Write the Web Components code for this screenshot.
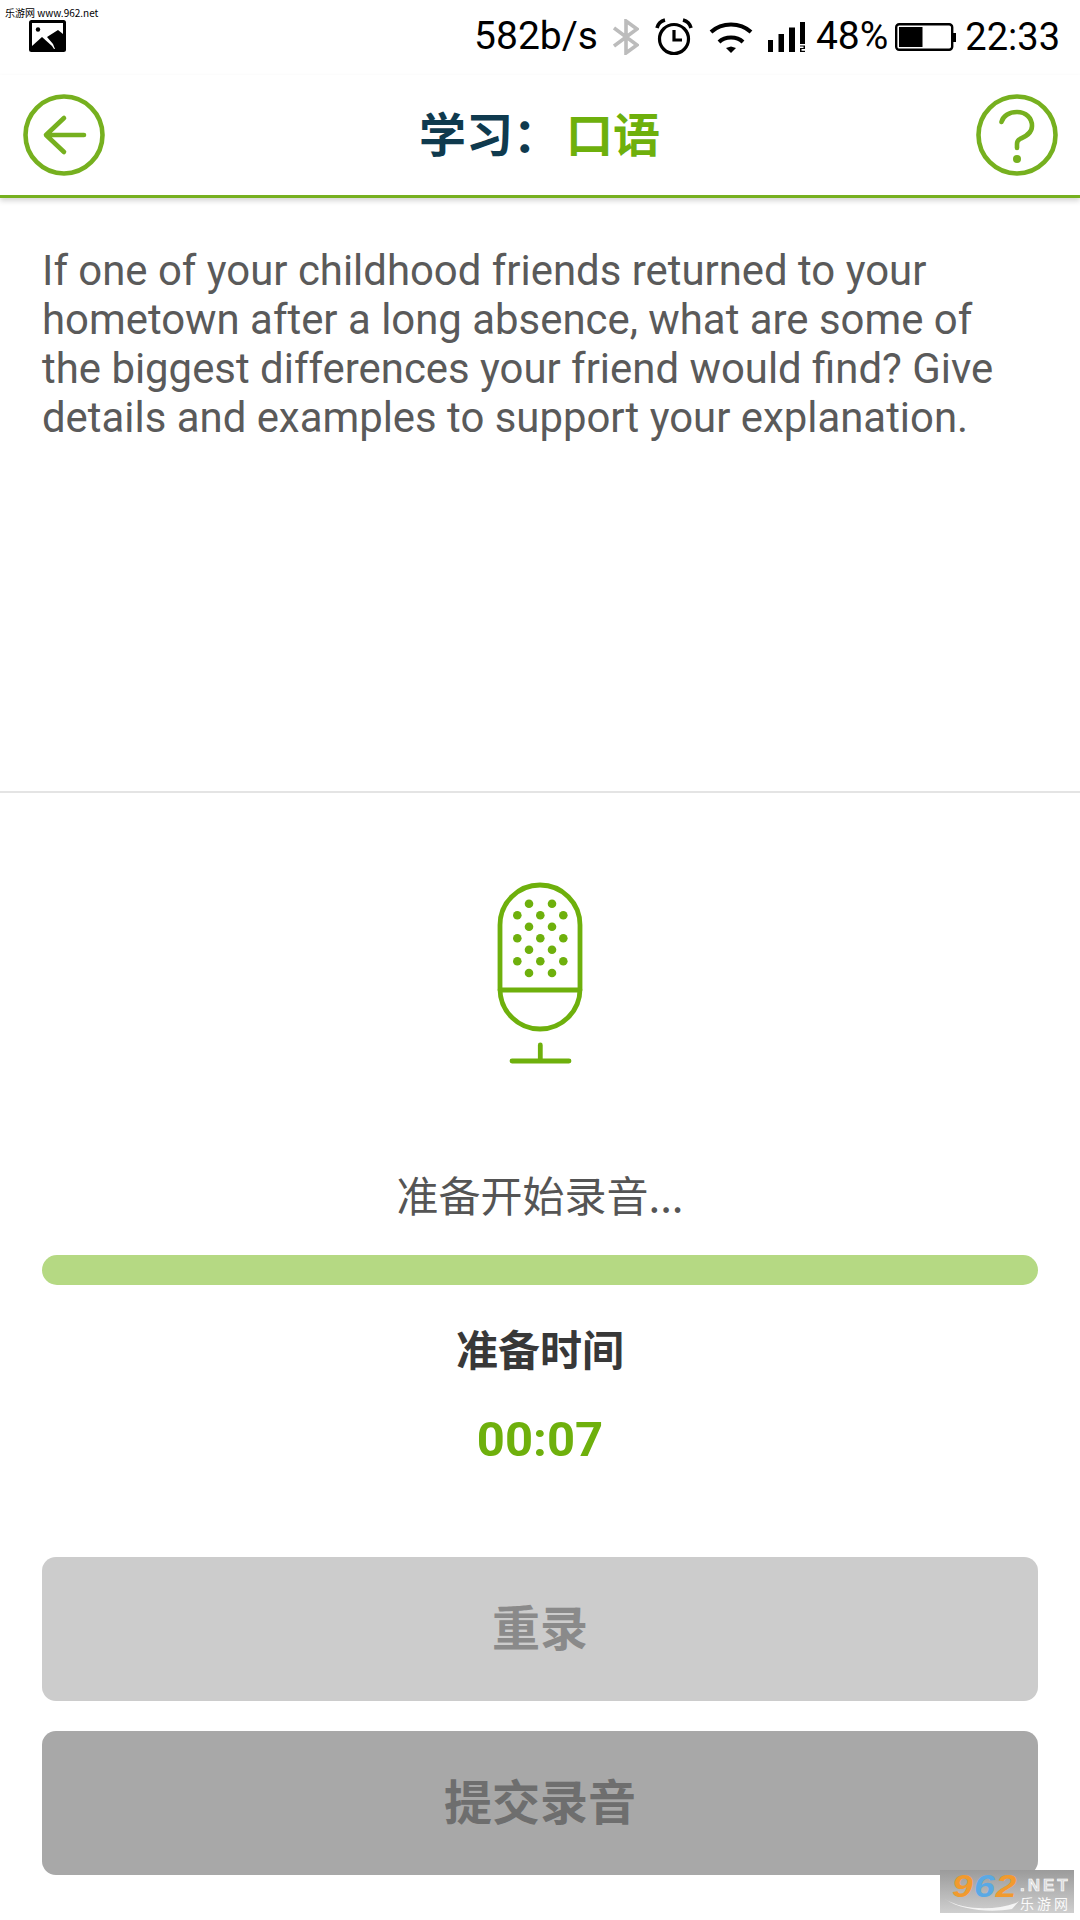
<!DOCTYPE html>
<html lang="zh">
<head>
<meta charset="utf-8">
<title>学习：口语</title>
<style>
  html, body {
    margin: 0;
    background: #fff;
  }

  body {
    width: 1080px;
    height: 1920px;
    overflow: hidden;
    font-family: Roboto, "Noto Sans CJK SC", sans-serif;
  }
</style>
</head>
<body>
<speaking-screen>
  <status-bar></status-bar>
  <title-bar>
    <span slot="label">学习：</span>
    <span slot="topic">口语</span>
  </title-bar>
  <question-panel>If one of your childhood friends returned to your hometown after a long absence, what are some of the biggest differences your friend would find? Give details and examples to support your explanation.</question-panel>
  <record-panel status="准备开始录音..." label="准备时间" time="00:07"></record-panel>
  <action-button tone="light">重录</action-button>
  <action-button tone="dark">提交录音</action-button>
</speaking-screen>
<site-badge></site-badge>

<script>
window.customElements.define('speaking-screen', class extends HTMLElement {
  constructor() {
    super();

    this.attachShadow({ mode: 'open' }).innerHTML = `<style>
  :host {
    display: flex;
    flex-direction: column;
    width: 1080px;
    height: 1920px;
    background: #fff;
  }
</style>
<slot></slot>`;
  }
});

window.customElements.define('status-bar', class extends HTMLElement {
  constructor() {
    super();

    this.attachShadow({ mode: 'open' }).innerHTML = `<style>
  :host {
    display: block;
    height: 75px;
    position: relative;
    color: #000;
    font: 39px/1 Roboto, sans-serif;
  }

  .source {
    position: absolute;
    left: 5px;
    top: 7px;
    font: 10px/12px "Noto Sans CJK SC", "Liberation Sans", sans-serif;
    white-space: nowrap;
  }

  .picture {
    position: absolute;
    left: 29px;
    top: 20px;
  }

  .right {
    display: flex;
    align-items: center;
    justify-content: flex-end;
    height: 73px;
    padding-right: 20px;
  }

  .clock {
    margin-left: 8px;
    font-size: 38px;
  }

  svg {
    display: block;
    flex: none;
  }
</style>
<div class="source">乐游网 www.962.net</div>
<svg class="picture" width="38" height="32" viewBox="0 0 38 32">
  <rect width="37" height="32" rx="2.5" fill="#000" />
  <rect x="3" y="3" width="31" height="26" fill="#fff" />
  <circle cx="9" cy="9.5" r="2.2" fill="#000" />
  <path d="M3 26 L13 17 L23 26 L25 29 H3 Z" fill="#000" />
  <path d="M18 17 L29 10 L34 14 V29 H26 L24 24 Z" fill="#000" />
</svg>
<div class="right">
  <span>582b/s</span>
  <svg style="margin-left:15px" width="26" height="36" viewBox="0 0 26 36" fill="none" stroke="#bcbcbc" stroke-width="3.6">
    <path d="M1 9 L24 26 L13 34 V2 L24 10 L1 27" />
  </svg>
  <svg style="margin-left:16px" width="38" height="38" viewBox="0 0 38 38" fill="none" stroke="#000">
    <circle cx="19" cy="21" r="14.5" stroke-width="3.2" />
    <path d="M19 12 V22 H27" stroke-width="3.2" />
    <path d="M2 10 C3 6 6 3 10 2" stroke-width="3.6" />
    <path d="M36 10 C35 6 32 3 28 2" stroke-width="3.6" />
  </svg>
  <svg style="margin-left:16px" width="44" height="32" viewBox="0 0 44 32" fill="none" stroke="#000" stroke-width="4">
    <path d="M2 11 C13 1 31 1 42 11" />
    <path d="M10 21 C16 15 28 15 34 21" />
    <path d="M17 27 L22 25.4 L27 27 L22 32 Z" fill="#000" stroke="none" />
  </svg>
  <svg style="margin-left:15px" width="38" height="32" viewBox="0 0 38 32" fill="#000">
    <rect x="0" y="19" width="5" height="12" />
    <rect x="10.5" y="13" width="5.5" height="18" />
    <rect x="21" y="6.5" width="6" height="24.5" />
    <rect x="32" y="1" width="5" height="22" />
    <path d="M32 24.5 H37 V28 H33.5 V29.8 H37 V31 H32 V27 H35.5 V25.6 H32 Z" />
  </svg>
  <span style="margin-left:10px">48%</span>
  <svg style="margin-left:7px" width="62" height="28" viewBox="0 0 62 28" fill="none">
    <rect x="1.200" y="1.200" width="56" height="25.600" rx="3" stroke="#000" stroke-width="2.4" />
    <rect x="4" y="4" width="23.500" height="20" fill="#000" />
    <path d="M58 10 H61 V19 H58 Z" fill="#000" />
  </svg>
  <span class="clock">22:33</span>
</div>`;
  }
});

window.customElements.define('title-bar', class extends HTMLElement {
  constructor() {
    super();

    this.attachShadow({ mode: 'open' }).innerHTML = `<style>
  :host {
    display: flex;
    align-items: center;
    justify-content: space-between;
    box-sizing: border-box;
    height: 123px;
    padding: 0 22px 1px 23px;
    border-bottom: 3px solid #76b01f;
    box-shadow: 0 3px 5px rgba(0, 0, 0, .16);
    background: #fff;
    position: relative;
  }

  svg {
    display: block;
    flex: none;
  }

  h1 {
    margin: 0 0 6px -2px;
    display: flex;
    gap: 6px;
    font: bold 47px/1 "Noto Sans CJK SC", sans-serif;
    color: #0f3a4e;
    white-space: nowrap;
  }

  .topic {
    color: #6eb00c;
  }
</style>
<svg width="82" height="82" viewBox="0 0 82 82" fill="none" stroke="#76b01f" stroke-width="4.600" stroke-linecap="round" stroke-linejoin="round">
  <circle cx="41" cy="41" r="38.500" />
  <path d="M61 41 H23 M41 24 L23 41 L41 58" />
</svg>
<h1><span><slot name="label"></slot></span><span class="topic"><slot name="topic"></slot></span></h1>
<svg width="82" height="82" viewBox="0 0 82 82" fill="none" stroke="#76b01f" stroke-width="4.600" stroke-linecap="round">
  <circle cx="41" cy="41" r="38.500" />
  <path d="M25.500 28 C27 22 33 18 41 18 C50 18 56 24 56 32 C56 40 48 43 44 45 C42 46 41 47 41 50 V54" />
  <circle cx="41" cy="65" r="4" fill="#76b01f" stroke="none" />
</svg>`;
  }
});

window.customElements.define('question-panel', class extends HTMLElement {
  constructor() {
    super();

    this.attachShadow({ mode: 'open' }).innerHTML = `<style>
  :host {
    display: block;
    box-sizing: border-box;
    height: 595px;
    padding: 48px 60px 0 42px;
    border-bottom: 2px solid #e4e4e4;
    font: 41.900px/49px Roboto, sans-serif;
    color: #5a5a5a;
  }
</style>
<slot></slot>`;
  }
});

window.customElements.define('record-panel', class extends HTMLElement {
  constructor() {
    super();

    const dots = [
      [39, 23.7], [62, 23.7],
      [27.3, 35.3], [50.3, 35.3], [73.3, 35.3],
      [39, 46.7], [62, 46.7],
      [27.3, 58.3], [50.3, 58.3], [73.3, 58.3],
      [39, 69.7], [62, 69.7],
      [27.3, 81.3], [50.3, 81.3], [73.3, 81.3],
      [39, 93], [62, 93]
    ].map(([x, y]) => `<circle cx="${x}" cy="${y}" r="4.300" />`).join('');

    this.attachShadow({ mode: 'open' }).innerHTML = `<style>
  :host {
    display: flex;
    flex-direction: column;
    align-items: center;
    padding: 0 42px;
    height: 764px;
    box-sizing: border-box;
    text-align: center;
  }

  svg {
    display: block;
    margin-top: 87px;
  }

  .status {
    margin-top: 103px;
    font: 42px/50px "Noto Sans CJK SC", sans-serif;
    color: #555;
  }

  .bar {
    align-self: stretch;
    height: 30px;
    margin-top: 36px;
    border-radius: 15px;
    background: #b5d983;
  }

  .label {
    margin-top: 38px;
    font: bold 42px/50px "Noto Sans CJK SC", sans-serif;
    color: #383838;
  }

  .time {
    margin-top: 42px;
    font: bold 49px/50px Roboto, sans-serif;
    color: #6eb00c;
  }
</style>
<svg width="100" height="186" viewBox="0 0 100 186" fill="none" stroke="#6eb00c" stroke-width="4.800" stroke-linecap="round">
  <rect x="10" y="5" width="80" height="144" rx="40" />
  <path d="M10 110 H90 M50.300 165 V181 M22 181 H79" />
  <g fill="#6eb00c" stroke="none">${dots}</g>
</svg>
<div class="status">${this.getAttribute('status')}</div>
<div class="bar"></div>
<div class="label">${this.getAttribute('label')}</div>
<div class="time">${this.getAttribute('time')}</div>`;
  }
});

window.customElements.define('action-button', class extends HTMLElement {
  constructor() {
    super();

    this.attachShadow({ mode: 'open' }).innerHTML = `<style>
  :host {
    display: flex;
    align-items: center;
    justify-content: center;
    box-sizing: border-box;
    height: 144px;
    margin: 0 42px 30px;
    padding-bottom: 9px;
    border-radius: 14px;
    background: #ccc;
    color: #8a8a8a;
    font: bold 48px/1 "Noto Sans CJK SC", sans-serif;
  }

  :host([tone="dark"]) {
    background: #a8a8a8;
    color: #6e6e6e;
  }
</style>
<slot></slot>`;
  }
});

window.customElements.define('site-badge', class extends HTMLElement {
  constructor() {
    super();

    this.attachShadow({ mode: 'open' }).innerHTML = `<style>
  :host {
    display: block;
    position: absolute;
    left: 940px;
    top: 1870px;
    width: 134px;
    height: 43px;
    background: linear-gradient(#9b9b9b, #cfcfcf);
  }

  .num {
    position: absolute;
    left: 12px;
    top: 2px;
    font: italic bold 31px/30px "Liberation Sans", sans-serif;
    letter-spacing: 1px;
    color: #f19a2e;
    transform: scaleX(1.2);
    transform-origin: left;
  }

  .num b {
    color: #5aa9e4;
  }

  .net {
    position: absolute;
    left: 80px;
    top: 7px;
    font: bold 17px/18px "Liberation Sans", sans-serif;
    letter-spacing: 3px;
    color: #d9d9d9;
    -webkit-text-stroke: .6px #fff;
  }

  .name {
    position: absolute;
    left: 80px;
    top: 25px;
    font: 14px/16px "Noto Sans CJK SC", sans-serif;
    letter-spacing: 3px;
    color: #fafafa;
  }

  svg {
    position: absolute;
    left: 4px;
    top: 28px;
  }
</style>
<span class="num">9<b>6</b>2</span>
<span class="net">.NET</span>
<span class="name">乐游网</span>
<svg width="76" height="14" viewBox="0 0 76 14"><path d="M1 1 C18 12 50 13 72 5 L75 3 L68 11 C46 15 16 12 1 1 Z" fill="#f4f4f4" /></svg>`;
  }
});
</script>
</body>
</html>
